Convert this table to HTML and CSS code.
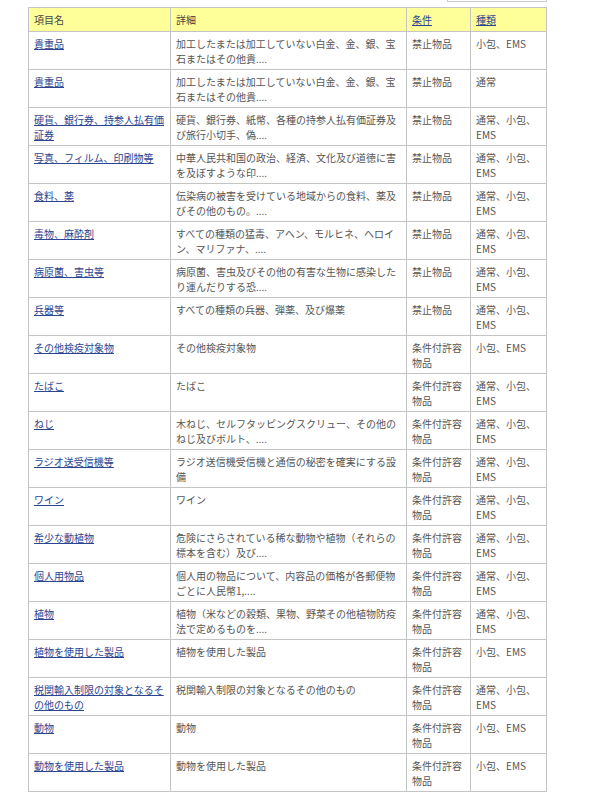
FILE: index.html
```html
<!DOCTYPE html>
<html lang="ja">
<head>
<meta charset="utf-8">
<title>禁止物品一覧</title>
<link rel="stylesheet" href="styles.css">
</head>
<body>
<div class="page">
  <div class="topbar"><div class="searchbox"></div></div>
  <table class="items">
    <colgroup>
      <col class="c1"><col class="c2"><col class="c3"><col class="c4">
    </colgroup>
    <thead>
      <tr><th>項目名</th><th>詳細</th><th><a href="#">条件</a></th><th><a href="#">種類</a></th></tr>
    </thead>
    <tbody>
      <tr><td><a href="#">貴重品</a></td><td>加工したまたは加工していない白金、金、銀、宝石またはその他貴....</td><td>禁止物品</td><td>小包、EMS</td></tr>
      <tr><td><a href="#">貴重品</a></td><td>加工したまたは加工していない白金、金、銀、宝石またはその他貴....</td><td>禁止物品</td><td>通常</td></tr>
      <tr><td><a href="#">硬貨、銀行券、持参人払有価証券</a></td><td>硬貨、銀行券、紙幣、各種の持参人払有価証券及び旅行小切手、偽....</td><td>禁止物品</td><td>通常、小包、EMS</td></tr>
      <tr><td><a href="#">写真、フィルム、印刷物等</a></td><td>中華人民共和国の政治、経済、文化及び道徳に害を及ぼすような印....</td><td>禁止物品</td><td>通常、小包、EMS</td></tr>
      <tr><td><a href="#">食料、薬</a></td><td>伝染病の被害を受けている地域からの食料、薬及びその他のもの。....</td><td>禁止物品</td><td>通常、小包、EMS</td></tr>
      <tr><td><a href="#">毒物、麻酔剤</a></td><td>すべての種類の猛毒、アヘン、モルヒネ、ヘロイン、マリファナ、....</td><td>禁止物品</td><td>通常、小包、EMS</td></tr>
      <tr><td><a href="#">病原菌、害虫等</a></td><td>病原菌、害虫及びその他の有害な生物に感染したり運んだりする恐....</td><td>禁止物品</td><td>通常、小包、EMS</td></tr>
      <tr><td><a href="#">兵器等</a></td><td>すべての種類の兵器、弾薬、及び爆薬</td><td>禁止物品</td><td>通常、小包、EMS</td></tr>
      <tr><td><a href="#">その他検疫対象物</a></td><td>その他検疫対象物</td><td>条件付許容物品</td><td>小包、EMS</td></tr>
      <tr><td><a href="#">たばこ</a></td><td>たばこ</td><td>条件付許容物品</td><td>通常、小包、EMS</td></tr>
      <tr><td><a href="#">ねじ</a></td><td>木ねじ、セルフタッピングスクリュー、その他のねじ及びボルト、....</td><td>条件付許容物品</td><td>通常、小包、EMS</td></tr>
      <tr><td><a href="#">ラジオ送受信機等</a></td><td>ラジオ送信機受信機と通信の秘密を確実にする設備</td><td>条件付許容物品</td><td>通常、小包、EMS</td></tr>
      <tr><td><a href="#">ワイン</a></td><td>ワイン</td><td>条件付許容物品</td><td>通常、小包、EMS</td></tr>
      <tr><td><a href="#">希少な動植物</a></td><td>危険にさらされている稀な動物や植物（それらの標本を含む）及び....</td><td>条件付許容物品</td><td>通常、小包、EMS</td></tr>
      <tr><td><a href="#">個人用物品</a></td><td>個人用の物品について、内容品の価格が各郵便物ごとに人民幣1,....</td><td>条件付許容物品</td><td>通常、小包、EMS</td></tr>
      <tr><td><a href="#">植物</a></td><td>植物（米などの穀類、果物、野菜その他植物防疫法で定めるものを....</td><td>条件付許容物品</td><td>通常、小包、EMS</td></tr>
      <tr><td><a href="#">植物を使用した製品</a></td><td>植物を使用した製品</td><td>条件付許容物品</td><td>小包、EMS</td></tr>
      <tr><td><a href="#">税関輸入制限の対象となるその他のもの</a></td><td>税関輸入制限の対象となるその他のもの</td><td>条件付許容物品</td><td>通常、小包、EMS</td></tr>
      <tr><td><a href="#">動物</a></td><td>動物</td><td>条件付許容物品</td><td>小包、EMS</td></tr>
      <tr><td><a href="#">動物を使用した製品</a></td><td>動物を使用した製品</td><td>条件付許容物品</td><td>小包、EMS</td></tr>
    </tbody>
  </table>
</div>
</body>
</html>
```

FILE: styles.css
```css
html, body {
  margin: 0;
  padding: 0;
  background: #ffffff;
}

.page {
  padding: 0 0 0 28px;
  font-family: "Noto Sans CJK JP", "Noto Sans", sans-serif;
  font-size: 10px;
  line-height: 15px;
  color: #555555;
}

.topbar {
  display: flex;
  justify-content: flex-start;
  padding-left: 419px;
  height: 2px;
  margin-bottom: 5px;
}

.searchbox {
  width: 98px;
  height: 1px;
  border: 1px solid #cccccc;
  border-top: none;
}

.items {
  border-collapse: collapse;
  table-layout: fixed;
  width: 518px;
}

.c1 { width: 142px; }
.c2 { width: 236px; }
.c3 { width: 64px; }
.c4 { width: 76px; }

.items th,
.items td {
  border: 1px solid #c4c4c4;
  text-align: left;
  vertical-align: top;
  font-weight: normal;
  word-break: break-all;
}

.items th {
  background: #ffff99;
  padding: 4px 5px 4px 5px;
  color: #444444;
}

.items td {
  padding: 4px 5px 3px 5px;
}

.items a {
  color: #2b4590;
  text-decoration: underline;
}
```
